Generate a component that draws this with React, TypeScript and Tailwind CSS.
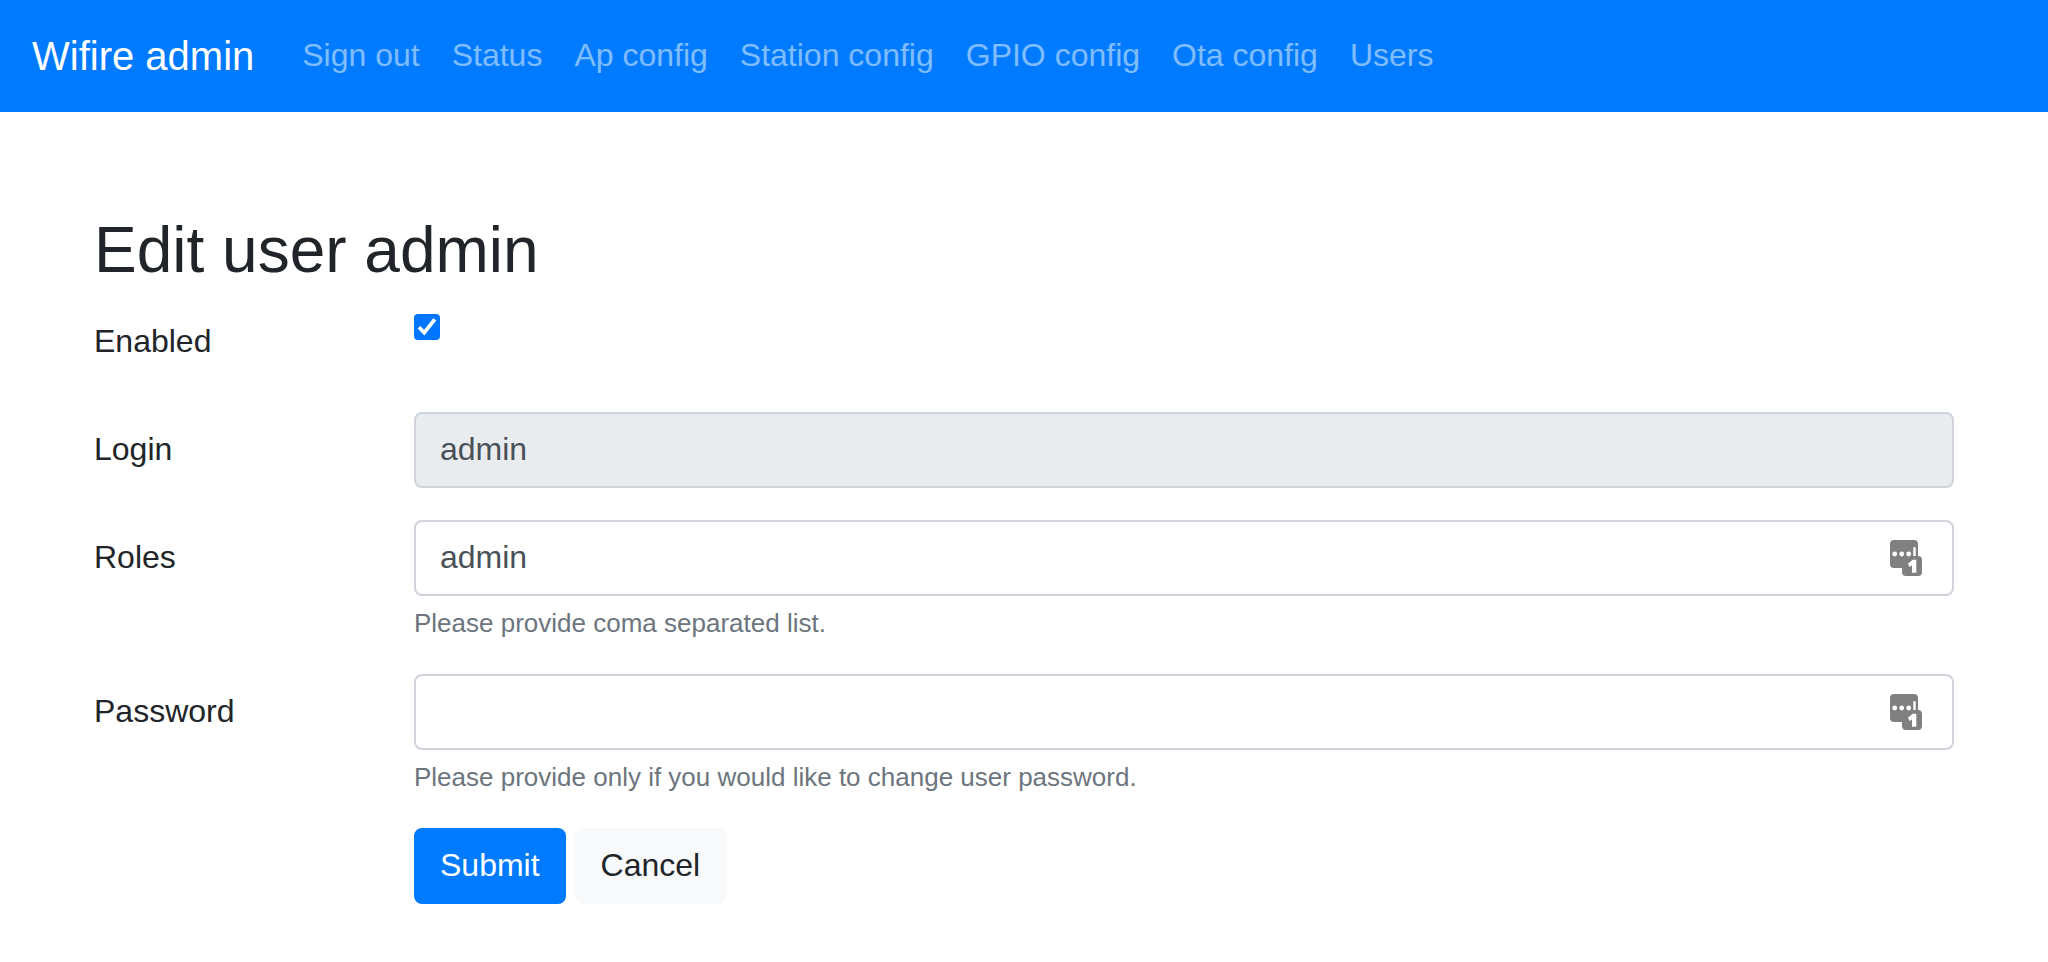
import type { ReactNode } from "react";

const links = ["Sign out", "Status", "Ap config", "Station config", "GPIO config", "Ota config", "Users"];

function PasswordManagerIcon() {
  return (
    <svg
      className="absolute top-1/2 right-8 h-9 w-8 -translate-y-1/2"
      viewBox="0 0 32 36"
      aria-hidden="true"
    >
      <rect width="28" height="28" rx="4" fill="#808080" />
      <rect x="12" y="16" width="20" height="20" rx="4" fill="#808080" />
      <g fill="#fff">
        <circle cx="4.7" cy="14" r="2.4" />
        <circle cx="11.7" cy="14" r="2.4" />
        <circle cx="18.7" cy="14" r="2.4" />
        <path d="M23.3 8.100a1.200 1.200 0 0 1 2.400 0V16h-2.400z" />
        <path d="M22.700 19.700H26.300V32.700H22V25.300L19.700 26.900L17.900 23.800z" />
      </g>
    </svg>
  );
}

type FieldProps = { id: string; label: string; help?: string; children: ReactNode };

function Field({ id, label, help, children }: FieldProps) {
  return (
    <div className="mb-8 grid grid-cols-12">
      <label htmlFor={id} className="col-span-2 self-start px-[30px] pt-[13px] pb-[15px]">
        {label}
      </label>
      <div className="col-span-10 px-[30px]">
        <div className="relative flex">{children}</div>
        {help && <small className="mt-2 block text-[26px] leading-[38px] text-[#6c757d]">{help}</small>}
      </div>
    </div>
  );
}

const inputClass =
  "w-full rounded-lg border-2 border-[#ced4da] bg-white px-6 pt-[11px] pb-[13px] text-[#495057] outline-none focus:border-[#80bdff] read-only:bg-[#e9ecef]";

export default function App() {
  return (
    <div className="font-['Liberation_Sans',Arial,sans-serif] text-[32px] leading-[48px] text-[#212529]">
      <nav className="flex items-center bg-[#007bff] px-8 py-4">
        <a href="#" className="mr-8 py-[10px] text-[40px] leading-[60px] text-white">
          Wifire admin
        </a>
        <ul className="flex">
          {links.map((link) => (
            <li key={link}>
              <a href="#" className="block px-4 pt-[15px] pb-[17px] text-white/50 hover:text-white/75">
                {link}
              </a>
            </li>
          ))}
        </ul>
      </nav>

      <main className="px-16 pt-[100px]">
        <h1 className="mb-[15px] px-[30px] text-[64px] leading-[77px] font-medium">Edit user admin</h1>
        <form onSubmit={(event) => event.preventDefault()}>
          <Field id="enabled" label="Enabled">
            <div className="relative mt-[10px] size-[26px]">
              <input
                id="enabled"
                type="checkbox"
                defaultChecked
                className="peer block size-full appearance-none rounded border-2 border-[#767676] bg-white checked:border-[#0075ff] checked:bg-[#0075ff]"
              />
              <svg
                className="pointer-events-none absolute inset-0 hidden size-full peer-checked:block"
                viewBox="0 0 26 26"
                aria-hidden="true"
              >
                <path d="M5 13.300l5.200 5.400L20.800 5.400" fill="none" stroke="#fff" strokeWidth="3.800" />
              </svg>
            </div>
          </Field>
          <Field id="login" label="Login">
            <input id="login" type="text" readOnly value="admin" className={inputClass} />
          </Field>
          <Field id="roles" label="Roles" help="Please provide coma separated list.">
            <input id="roles" type="text" defaultValue="admin" className={inputClass} />
            <PasswordManagerIcon />
          </Field>
          <Field id="password" label="Password" help="Please provide only if you would like to change user password.">
            <input id="password" type="password" className={inputClass} />
            <PasswordManagerIcon />
          </Field>
          <div className="grid grid-cols-12">
            <div className="col-span-10 col-start-3 flex gap-[9px] px-[30px]">
              <button
                type="submit"
                className="rounded-lg border-2 border-[#007bff] bg-[#007bff] px-6 pt-[11px] pb-[13px] text-white"
              >
                Submit
              </button>
              <button
                type="button"
                className="rounded-lg border-2 border-[#f8f9fa] bg-[#f8f9fa] px-6 pt-[11px] pb-[13px]"
              >
                Cancel
              </button>
            </div>
          </div>
        </form>
      </main>
    </div>
  );
}
